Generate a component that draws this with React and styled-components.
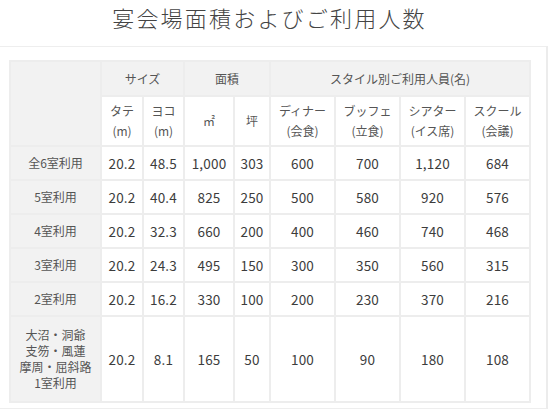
import React from "react";
import styled, { createGlobalStyle } from "styled-components";

const Global = createGlobalStyle`
  html, body {
    margin: 0;
    padding: 0;
    background: #fff;
  }
  body {
    font-family: "Noto Sans CJK JP", "Noto Sans", sans-serif;
    color: #444;
  }
`;

const Page = styled.div`
  width: 551px;
  height: 413px;
  overflow: hidden;
`;

const Title = styled.h2`
  margin: 0;
  height: 46px;
  padding: 2px 12px 0 0;
  box-sizing: border-box;
  text-align: center;
  font-size: 22px;
  line-height: 30px;
  font-weight: 300;
  letter-spacing: 2.2px;
  color: #444;
`;

const Panel = styled.div`
  width: 548px;
  height: 363px;
  box-sizing: border-box;
  border-top: 1px solid #eeeeee;
  border-right: 2px solid #ececec;
  border-bottom: 1px solid #eeeeee;
  padding: 13px 17px 0 9px;
`;

const Table = styled.table`
  width: 520px;
  border-collapse: collapse;
  table-layout: fixed;
  font-size: 12px;
`;

const Cell = styled.td`
  border: 2px solid #ededed;
  text-align: center;
  vertical-align: middle;
  padding: 0;
  font-weight: 400;
  height: ${p => p.h || 32}px;
  background: ${p => (p.gray ? "#f2f2f2" : "#fff")};
  color: ${p => (p.num ? "#3c3c3c" : "#555")};
  font-size: ${p => (p.num ? "13.5px" : "12px")};
  line-height: ${p => p.lh || 18}px;
  letter-spacing: ${p => (p.num ? "0.2px" : "0")};
`;

const widths = [91, 42, 41, 50, 36, 65, 65, 65, 65];

const rows = [
  ["全6室利用", "20.2", "48.5", "1,000", "303", "600", "700", "1,120", "684"],
  ["5室利用", "20.2", "40.4", "825", "250", "500", "580", "920", "576"],
  ["4室利用", "20.2", "32.3", "660", "200", "400", "460", "740", "468"],
  ["3室利用", "20.2", "24.3", "495", "150", "300", "350", "560", "315"],
  ["2室利用", "20.2", "16.2", "330", "100", "200", "230", "370", "216"]
];

const subHeads = [
  ["タテ", "(m)"],
  ["ヨコ", "(m)"],
  ["㎡"],
  ["坪"],
  ["ディナー", "(会食)"],
  ["ブッフェ", "(立食)"],
  ["シアター", "(イス席)"],
  ["スクール", "(会議)"]
];

const Lines = ({ items }) =>
  items.map((t, i) => (
    <React.Fragment key={i}>
      {i > 0 && <br />}
      {t}
    </React.Fragment>
  ));

export default function App() {
  return (
    <Page>
      <Global />
      <Title>宴会場面積およびご利用人数</Title>
      <Panel>
        <Table>
          <colgroup>
            {widths.map((w, i) => (
              <col key={i} style={{ width: w }} />
            ))}
          </colgroup>
          <tbody>
            <tr>
              <Cell as="th" gray rowSpan={2} />
              <Cell as="th" gray colSpan={2} h={33}>サイズ</Cell>
              <Cell as="th" gray colSpan={2}>面積</Cell>
              <Cell as="th" gray colSpan={4}>スタイル別ご利用人員(名)</Cell>
            </tr>
            <tr>
              {subHeads.map((s, i) => (
                <Cell as="th" key={i} h={48} lh={20}>
                  <Lines items={s} />
                </Cell>
              ))}
            </tr>
            {rows.map(r => (
              <tr key={r[0]}>
                <Cell gray>{r[0]}</Cell>
                {r.slice(1).map((v, i) => (
                  <Cell num key={i}>{v}</Cell>
                ))}
              </tr>
            ))}
            <tr>
              <Cell gray h={84} lh={16}>
                <Lines items={["大沼・洞爺", "支笏・風蓮", "摩周・屈斜路", "1室利用"]} />
              </Cell>
              {["20.2", "8.1", "165", "50", "100", "90", "180", "108"].map((v, i) => (
                <Cell num key={i} h={84}>{v}</Cell>
              ))}
            </tr>
          </tbody>
        </Table>
      </Panel>
    </Page>
  );
}
